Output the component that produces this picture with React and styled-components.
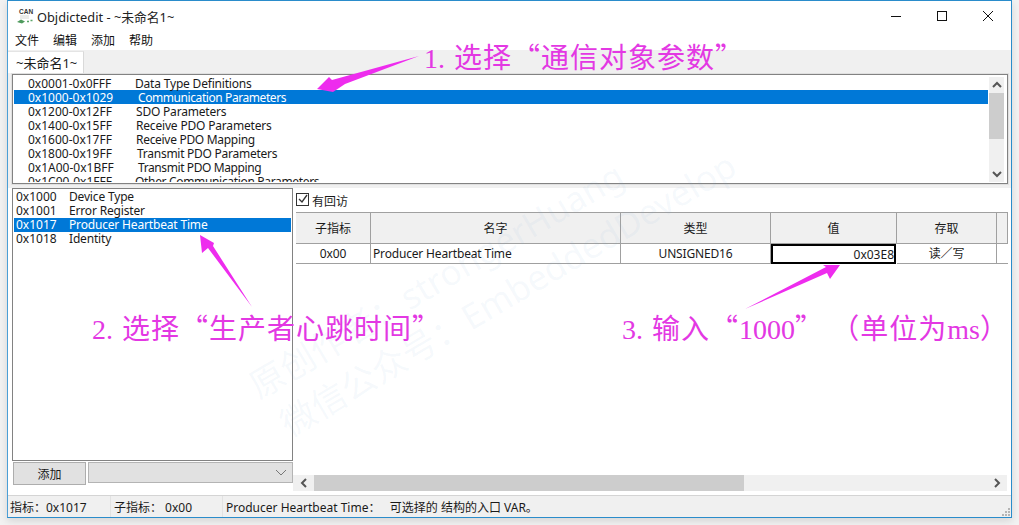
import React from 'react'
import styled, { createGlobalStyle } from 'styled-components'

const GlobalStyle = createGlobalStyle`
  html, body {
    margin: 0;
    padding: 0;
    height: 525px;
    overflow: hidden;
    background: #f2f2f2;
  }
  * {
    box-sizing: border-box;
  }
`

const Page = styled.div`
  position: relative;
  width: 1019px;
  height: 525px;
  padding-left: 7px;
  font-family: "Noto Sans", "Noto Sans CJK SC", sans-serif;
  font-size: 12px;
  color: #1a1a1a;
`

const Window = styled.div`
  width: 1005px;
  height: 518px;
  display: flex;
  flex-direction: column;
  background: #fff;
  border: 1px solid #2a8ccb;
  border-left-color: #4b9fd6;
  box-shadow: 0 3px 8px rgba(0, 0, 0, 0.12);
`

const TitleBar = styled.div`
  height: 30px;
  display: flex;
  align-items: center;
  padding-left: 8px;
  flex-shrink: 0;
`

const AppTitle = styled.span`
  margin-left: 3px;
  font-size: 12.8px;
  color: #222;
`

const WindowButtons = styled.div`
  margin-left: auto;
  display: flex;
`

const WindowButton = styled.div`
  width: 46px;
  height: 30px;
  display: flex;
  align-items: center;
  justify-content: center;
`

const MenuBar = styled.div`
  height: 19px;
  display: flex;
  align-items: center;
  gap: 14px;
  padding: 0 0 2px 7px;
  flex-shrink: 0;
`

const MenuItem = styled.span`
  font-size: 12px;
  color: #111;
`

const TabStrip = styled.div`
  height: 23px;
  background: #f0f0f0;
  display: flex;
  align-items: flex-end;
  flex-shrink: 0;
`

const Tab = styled.div`
  width: 76px;
  height: 22px;
  background: #fff;
  border-right: 1px solid #d9d9d9;
  border-top: 1px solid #e4e4e4;
  padding-left: 8px;
  display: flex;
  align-items: center;
  font-size: 13px;
`

const TopSection = styled.div`
  background: #f0f0f0;
  padding: 1px 3px 4px 4px;
  flex-shrink: 0;
`

const Panel = styled.div`
  border: 1px solid #828282;
  box-shadow: 0 0 0 1px #e0e0e0;
  background: #fff;
`

const TopList = styled(Panel)`
  height: 110px;
  display: flex;
  padding: 1px 3px 1px 1px;
`

const RowClip = styled.div`
  flex: 1;
  overflow: hidden;
`

const ListRow = styled.div`
  height: 14px;
  line-height: ${p => p.$lineHeight}px;
  display: flex;
  white-space: nowrap;
  padding-left: ${p => p.$indent}px;
  background: ${p => (p.$selected ? '#0078d7' : 'transparent')};
  color: ${p => (p.$selected ? '#fff' : '#1a1a1a')};
`

const RowKey = styled.span`
  width: ${p => p.$width}px;
  flex-shrink: 0;
`

const RowName = styled.span`
  letter-spacing: ${p => p.$spacing}px;
`

const VScroll = styled.div`
  width: 15px;
  margin: 1px 0 0 1px;
  display: flex;
  flex-direction: column;
  background: #f0f0f0;
`

const ScrollButton = styled.div`
  width: ${p => p.$size || 15}px;
  height: 16px;
  display: flex;
  align-items: center;
  justify-content: center;
  flex-shrink: 0;
  color: #555;
`

const VThumb = styled.div`
  height: 46px;
  background: #cdcdcd;
`

const Filler = styled.div`
  flex: 1;
`

const LowerSection = styled.div`
  flex: 1;
  display: flex;
  padding-left: 4px;
  min-height: 0;
`

const LeftColumn = styled.div`
  width: 281px;
  display: flex;
  flex-direction: column;
  flex-shrink: 0;
`

const IndexList = styled(Panel)`
  box-shadow: none;
  height: 273px;
  padding: 1px;
`

const AddRow = styled.div`
  display: flex;
  margin-top: 1px;
  padding-left: 1px;
  align-items: flex-start;
`

const AddButton = styled.div`
  width: 73px;
  height: 23px;
  background: #e1e1e1;
  border: 1px solid #adadad;
  display: flex;
  align-items: center;
  justify-content: center;
`

const Select = styled.div`
  width: 205px;
  height: 21px;
  margin-left: 2px;
  background: #e1e1e1;
  border: 1px solid #b4b4b4;
  display: flex;
  align-items: center;
  justify-content: flex-end;
  padding-right: 6px;
  color: #666;
`

const RightColumn = styled.div`
  flex: 1;
  display: flex;
  flex-direction: column;
  min-width: 0;
  padding-bottom: 4px;
`

const CallbackRow = styled.div`
  height: 24px;
  display: flex;
  align-items: center;
  padding-left: 3px;
  gap: 3px;
`

const CheckBox = styled.div`
  width: 13px;
  height: 13px;
  margin-bottom: 2px;
  border: 1px solid #333;
  display: flex;
  align-items: center;
  justify-content: center;
`

const CallbackLabel = styled.span`
  margin-top: 2px;
`

const TableGrid = styled.div`
  margin-left: 3px;
  margin-right: 3px;
  display: grid;
  grid-template-columns: 75px 250px 150px 126px 100px 1fr;
  border-top: 1px solid #a0a0a0;
`

const HeadCell = styled.div`
  height: 31px;
  background: #f0f0f0;
  border-right: 1px solid #a0a0a0;
  border-bottom: 1px solid #a0a0a0;
  display: flex;
  align-items: center;
  justify-content: center;
  &:last-child {
    border-right: 0;
  }
`

const BodyCell = styled.div`
  height: 20px;
  border-right: 1px solid #a0a0a0;
  border-bottom: 1px solid #a0a0a0;
  display: flex;
  align-items: center;
  letter-spacing: -0.17px;
  justify-content: ${p => p.$align || 'center'};
  padding-left: ${p => (p.$align === 'flex-start' ? 2 : 0)}px;
  padding-bottom: 1px;
  &:last-child {
    border-right: 0;
  }
`

const ActiveCell = styled.div`
  height: 20px;
  margin-right: 1px;
  border: 2px solid #000;
  display: flex;
  align-items: center;
  justify-content: flex-end;
`

const HScroll = styled.div`
  margin-right: 4px;
  height: 16px;
  display: flex;
  background: #f0f0f0;
`

const HThumb = styled.div`
  width: 430px;
  background: #cdcdcd;
`

const StatusBar = styled.div`
  height: 22px;
  flex-shrink: 0;
  display: flex;
  align-items: center;
  background: #f0f0f0;
  border-top: 1px solid #d4d4d4;
`

const StatusCell = styled.div`
  width: ${p => p.$width}px;
  height: 100%;
  padding-left: ${p => p.$pad}px;
  display: flex;
  align-items: center;
  white-space: pre;
  border-right: 1px solid #e2e2e2;
  &:nth-child(3) {
    border-right: 0;
  }
`

const Grip = styled.svg`
  margin-left: auto;
  align-self: flex-end;
`

const Overlay = styled.div`
  position: absolute;
  inset: 0;
  pointer-events: none;
  overflow: hidden;
`

const Watermark = styled.div`
  position: absolute;
  left: ${p => p.$x}px;
  top: ${p => p.$y}px;
  font-size: 35px;
  line-height: 1;
  white-space: nowrap;
  color: rgba(120, 165, 215, 0.07);
  transform: rotate(-30.5deg);
  transform-origin: left top;
`

const Callout = styled.div`
  position: absolute;
  left: ${p => p.$x}px;
  top: ${p => p.$y}px;
  font-family: "Noto Sans CJK SC", sans-serif;
  font-size: 28px;
  line-height: 32px;
  white-space: pre;
  letter-spacing: 1px;
  color: #e338e3;
`

const Serif = styled.span`
  font-family: "Liberation Serif", serif;
  letter-spacing: 0;
`

const Step = styled(Serif)`
  margin-right: 2px;
`

const ArrowLayer = styled.svg`
  position: absolute;
  left: 0;
  top: 0;
`

const groups = [
  { range: '0x0001-0x0FFF', name: 'Data Type Definitions', key: 107, spacing: -0.19 },
  { range: '0x1000-0x1029', name: 'Communication Parameters', key: 110, spacing: -0.42, selected: true },
  { range: '0x1200-0x12FF', name: 'SDO Parameters', key: 108, spacing: -0.2 },
  { range: '0x1400-0x15FF', name: 'Receive PDO Parameters', key: 108, spacing: -0.18 },
  { range: '0x1600-0x17FF', name: 'Receive PDO Mapping', key: 108, spacing: -0.3 },
  { range: '0x1800-0x19FF', name: 'Transmit PDO Parameters', key: 109, spacing: -0.26 },
  { range: '0x1A00-0x1BFF', name: 'Transmit PDO Mapping', key: 110, spacing: -0.4 },
  { range: '0x1C00-0x1FFF', name: 'Other Communication Parameters', key: 107, spacing: -0.33 },
]

const indexes = [
  { id: '0x1000', name: 'Device Type' },
  { id: '0x1001', name: 'Error Register' },
  { id: '0x1017', name: 'Producer Heartbeat Time', selected: true },
  { id: '0x1018', name: 'Identity' },
]

const Chevron = ({ dir }) => {
  const points = {
    up: '1,6 5,2 9,6',
    down: '1,2 5,6 9,2',
    left: '6,1 2,5 6,9',
    right: '2,1 6,5 2,9',
  }[dir]
  const horizontal = dir === 'left' || dir === 'right'
  return (
    <svg width={horizontal ? 8 : 10} height={horizontal ? 10 : 8}>
      <polyline points={points} fill="none" stroke="#555" strokeWidth="2" />
    </svg>
  )
}

const AppIcon = () => (
  <svg width="18" height="17" viewBox="0 0 18 17">
    <text x="3" y="6" fontSize="6.5" fontWeight="700" fontFamily="Liberation Sans, sans-serif" fill="#333">CAN</text>
    <path d="M4 8h9M4 10h9" stroke="#d5d8d5" strokeWidth="1" />
    <path d="M1 14 L5 11.5 L9 13.5 L6 15.5 Z" fill="#4f9a5d" />
    <path d="M11 13.5h2M14.5 12.5h2" stroke="#5aa568" strokeWidth="1.3" />
  </svg>
)

export default function App() {
  return (
    <>
      <GlobalStyle />
      <Page>
        <Window>
          <TitleBar>
            <AppIcon />
            <AppTitle>Objdictedit - ~未命名1~</AppTitle>
            <WindowButtons>
              <WindowButton>
                <svg width="10" height="10"><path d="M0 5.5h10" stroke="#111" /></svg>
              </WindowButton>
              <WindowButton>
                <svg width="10" height="10"><rect x=".5" y=".5" width="9" height="9" fill="none" stroke="#111" /></svg>
              </WindowButton>
              <WindowButton>
                <svg width="10" height="10"><path d="M0 0l10 10M10 0L0 10" stroke="#111" /></svg>
              </WindowButton>
            </WindowButtons>
          </TitleBar>
          <MenuBar>
            {['文件', '编辑', '添加', '帮助'].map(m => <MenuItem key={m}>{m}</MenuItem>)}
          </MenuBar>
          <TabStrip>
            <Tab>~未命名1~</Tab>
          </TabStrip>
          <TopSection>
            <TopList>
              <RowClip>
                {groups.map(g => (
                  <ListRow key={g.range} $indent={14} $lineHeight={15} $selected={g.selected}>
                    <RowKey $width={g.key}>{g.range}</RowKey>
                    <RowName $spacing={g.spacing}>{g.name}</RowName>
                  </ListRow>
                ))}
              </RowClip>
              <VScroll>
                <ScrollButton><Chevron dir="up" /></ScrollButton>
                <VThumb />
                <Filler />
                <ScrollButton><Chevron dir="down" /></ScrollButton>
              </VScroll>
            </TopList>
          </TopSection>
          <LowerSection>
            <LeftColumn>
              <IndexList>
                {indexes.map(i => (
                  <ListRow key={i.id} $indent={2} $lineHeight={14} $selected={i.selected}>
                    <RowKey $width={53}>{i.id}</RowKey>
                    <RowName $spacing={-0.17}>{i.name}</RowName>
                  </ListRow>
                ))}
              </IndexList>
              <AddRow>
                <AddButton>添加</AddButton>
                <Select>
                  <svg width="10" height="6"><polyline points="0,0 5,5 10,0" fill="none" stroke="#777" /></svg>
                </Select>
              </AddRow>
            </LeftColumn>
            <RightColumn>
              <CallbackRow>
                <CheckBox>
                  <svg width="11" height="11"><polyline points="2,5 5,8 10,1" fill="none" stroke="#333" strokeWidth="1.3" /></svg>
                </CheckBox>
                <CallbackLabel>有回访</CallbackLabel>
              </CallbackRow>
              <TableGrid>
                <HeadCell>子指标</HeadCell>
                <HeadCell>名字</HeadCell>
                <HeadCell>类型</HeadCell>
                <HeadCell>值</HeadCell>
                <HeadCell>存取</HeadCell>
                <HeadCell />
                <BodyCell>0x00</BodyCell>
                <BodyCell $align="flex-start">Producer Heartbeat Time</BodyCell>
                <BodyCell>UNSIGNED16</BodyCell>
                <ActiveCell>0x03E8</ActiveCell>
                <BodyCell>读／写</BodyCell>
                <BodyCell />
              </TableGrid>
              <Filler />
              <HScroll>
                <ScrollButton $size={21}><Chevron dir="left" /></ScrollButton>
                <HThumb />
                <Filler />
                <ScrollButton $size={21}><Chevron dir="right" /></ScrollButton>
              </HScroll>
            </RightColumn>
          </LowerSection>
          <StatusBar>
            <StatusCell $width={103} $pad={2}>指标：0x1017</StatusCell>
            <StatusCell $width={112} $pad={3}>子指标： 0x00</StatusCell>
            <StatusCell $width={500} $pad={3}>Producer Heartbeat Time：   可选择的 结构的入口 VAR。</StatusCell>
            <Grip width="9" height="9">
              <g fill="#b5b5b5">
                <rect x="6" y="0" width="2" height="2" />
                <rect x="3" y="3" width="2" height="2" />
                <rect x="6" y="3" width="2" height="2" />
                <rect x="0" y="6" width="2" height="2" />
                <rect x="3" y="6" width="2" height="2" />
                <rect x="6" y="6" width="2" height="2" />
              </g>
            </Grip>
          </StatusBar>
        </Window>
        <Overlay>
          <Watermark $x={243} $y={373}>原创作者：strongerHuang</Watermark>
          <Watermark $x={274} $y={411}>微信公众号：EmbeddedDevelop</Watermark>
          <ArrowLayer width="1019" height="525">
            <g fill="#ee2cee">
              <polygon points="419,56 332,80 329,77 317,89 333,92 345,84" />
              <polygon points="252,307 213,246 214,243 200,235 202,253 208,248" />
              <polygon points="745,309 826,267 823,265 840,265 830,279 827,273" />
            </g>
          </ArrowLayer>
          <Callout $x={424} $y={40}><Step>1. </Step>选择“通信对象参数”</Callout>
          <Callout $x={92} $y={311}><Step>2. </Step>选择“生产者心跳时间”</Callout>
          <Callout $x={622} $y={311}><Step>3. </Step>输入“<Serif>1000</Serif>” （单位为<Serif>ms</Serif>）</Callout>
        </Overlay>
      </Page>
    </>
  )
}
